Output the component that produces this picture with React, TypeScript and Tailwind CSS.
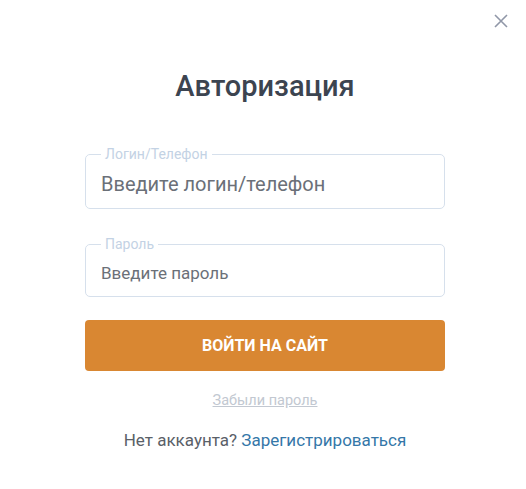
import { useState } from 'react';

function Field({ label, placeholder, type, big }: { label: string; placeholder: string; type: string; big?: boolean }) {
  const [value, setValue] = useState('');
  return (
    <fieldset className="border border-[#d6e0ec] rounded-[5px] px-[15px] pb-0 m-0 min-w-0">
      <legend className="px-[4px] text-[14px] leading-[16px] text-[#c3d2e4]">{label}</legend>
      <input
        type={type}
        value={value}
        onChange={(e) => setValue(e.target.value)}
        placeholder={placeholder}
        className={
          'w-full outline-none bg-transparent -mt-[3px] text-[#555b63] placeholder:text-[#6b7078] ' +
          (big ? 'h-[49px] text-[20px]' : 'h-[47px] text-[17px]')
        }
      />
    </fieldset>
  );
}

export default function App() {
  return (
    <div className="relative w-[526px] h-[489px] bg-white font-['Roboto',sans-serif]">
      <button className="absolute right-[17px] top-[13px] w-[16px] h-[16px] text-[#9097a8]" aria-label="Закрыть">
        <svg viewBox="0 0 16 16" width="16" height="16" fill="none" stroke="currentColor" strokeWidth="1.6">
          <path d="M2 2 L14 14 M14 2 L2 14" />
        </svg>
      </button>

      <div className="flex flex-col items-center pt-[68px] pl-[4px]">
        <h1 className="text-[29px] leading-[36px] font-medium text-[#3c4450]">Авторизация</h1>

        <form className="w-[360px] mt-[42px] flex flex-col" onSubmit={(e) => e.preventDefault()}>
          <Field label="Логин/Телефон" placeholder="Введите логин/телефон" type="text" big />
          <div className="h-[27px]" />
          <Field label="Пароль" placeholder="Введите пароль" type="password" />
          <button
            type="submit"
            className="mt-[23px] h-[51px] rounded-[4px] bg-[#d98732] text-white text-[16px] font-bold uppercase"
          >
            Войти на сайт
          </button>
        </form>

        <a href="#" className="mt-[19px] text-[14.5px] text-[#c2c8d1] underline">Забыли пароль</a>
        <p className="mt-[16px] text-[17px] text-[#5a6068]">
          Нет аккаунта? <a href="#" className="text-[#3577a8]">Зарегистрироваться</a>
        </p>
      </div>
    </div>
  );
}
